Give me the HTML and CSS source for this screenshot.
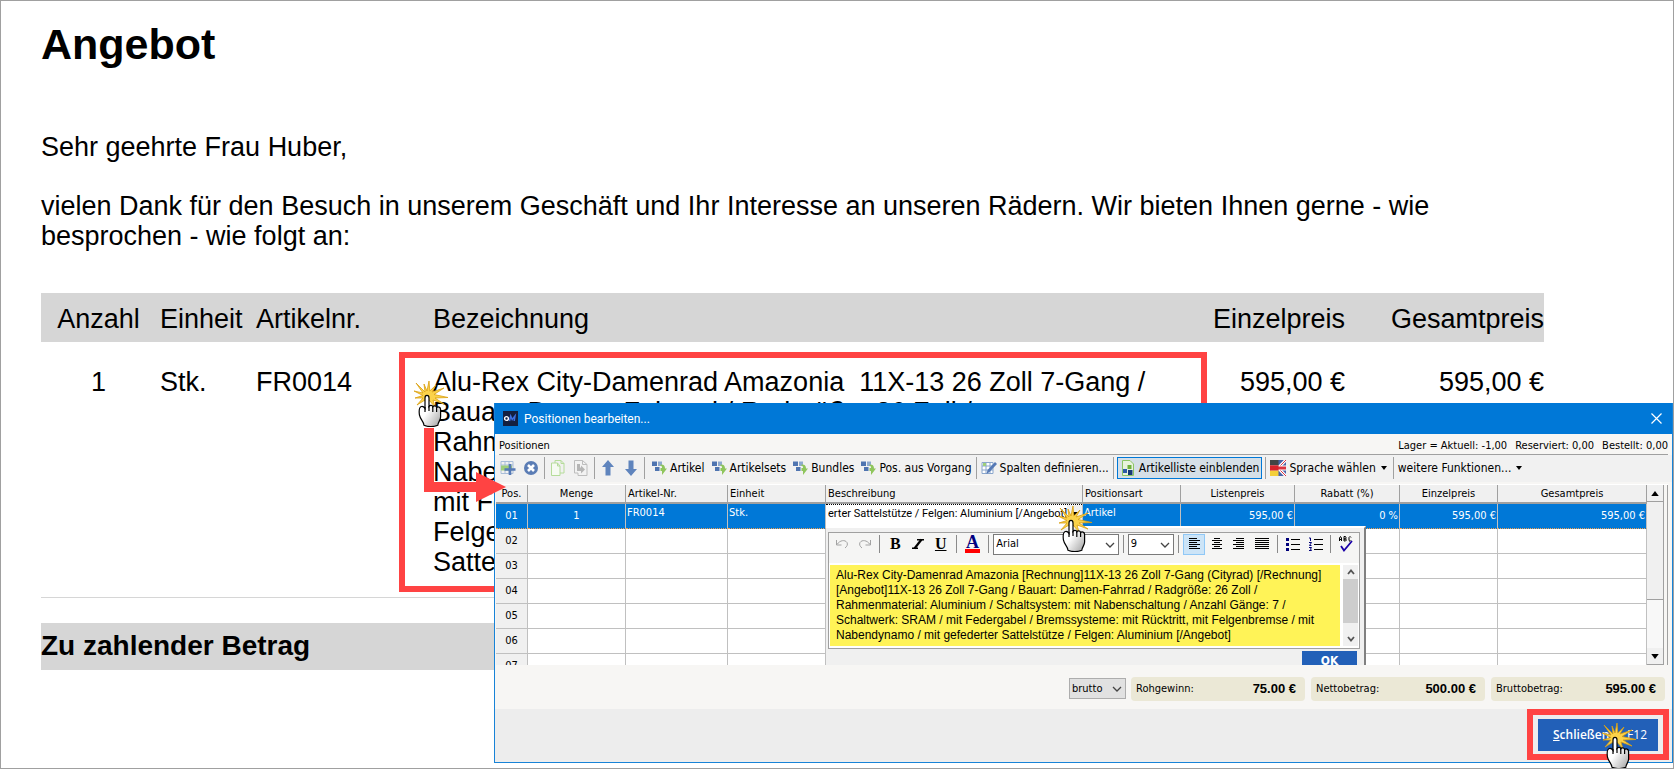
FILE: index.html
```html
<!DOCTYPE html>
<html lang="de">
<head>
<meta charset="utf-8">
<title>Angebot</title>
<link rel="stylesheet" href="styles.css">
</head>
<body>
<svg class="defs" aria-hidden="true">
  <linearGradient id="skin" x1="0" y1="0" x2="1" y2="1">
    <stop offset=".45" stop-color="#fff"/><stop offset="1" stop-color="#a0a0a0"/>
  </linearGradient>
  <symbol id="click" viewBox="0 0 36 46">
    <path d="M2 2l9 9L10 3l3 7L15 0l.8 10L22 4l-4 7 12-4-10 6.500 14 3-13 .5 9 6-11-4 2 7-6-7-2 8-2-8-8 5 6-7-8 0 8-2.500-9-4.500 9 2z" fill="#fbd24a" stroke="#d9a010" stroke-width=".8"/>
    <path d="M11 17c0-3.500 4-3.500 4 0v8.500c1-1.600 3.500-1.400 3.800.3 1-1.500 3.500-1.200 3.800.7 1.200-1.200 4-.6 4 2V36c0 3.500-2.600 5-2.800 8.300-4 1.500-10 1.500-13.800 0-.3-4-3.400-5-4.600-10.500C4.800 29 5 26 7.500 25.500c1.500-.3 2.500.5 3.500 2z" fill="url(#skin)" stroke="#000" stroke-width="1.200"/>
    <path d="M15 25v5M18.800 26v5M22.600 27v4M11 26v5" stroke="#000" stroke-width="1.200" fill="none"/>
  </symbol>
  <symbol id="insert" viewBox="0 0 16 16">
    <path d="M1 1.500h5v4.500H1z" fill="#4f74b0"/><path d="M7 1.500h4v4.500H7z" fill="#8ea9cf"/><path d="M4 7h4.500v4H4z" fill="#4f74b0"/>
    <path d="M9.500 4.500c3.500 0 4.500 1.500 4.500 4h2l-5 6.500V11H9.500V8h1.500c0-2-.5-2-1.500-2z" fill="#8fc55c"/>
  </symbol>
  <symbol id="chev" viewBox="0 0 10 6"><path d="M1 1l4 4 4-4" fill="none" stroke="#444" stroke-width="1.300"/></symbol>
  <symbol id="tri" viewBox="0 0 6 4"><path d="M0 0h6L3 4z"/></symbol>
</svg>

<main class="page">
  <h1>Angebot</h1>
  <p class="greeting">Sehr geehrte Frau Huber,</p>
  <p class="intro">vielen Dank für den Besuch in unserem Geschäft und Ihr Interesse an unseren Rädern. Wir bieten Ihnen gerne - wie besprochen - wie folgt an:</p>

  <table class="offer">
    <colgroup><col class="c-qty"><col class="c-unit"><col class="c-no"><col><col class="c-price"><col class="c-price"></colgroup>
    <thead>
      <tr><th class="mid">Anzahl</th><th>Einheit</th><th>Artikelnr.</th><th>Bezeichnung</th><th class="num">Einzelpreis</th><th class="num">Gesamtpreis</th></tr>
    </thead>
    <tbody>
      <tr>
        <td class="mid">1</td><td>Stk.</td><td>FR0014</td>
        <td class="desc">Alu-Rex City-Damenrad Amazonia&nbsp; 11X-13 26 Zoll 7-Gang /<br>Bauart: Damen-Fahrrad / Radgröße: 26 Zoll /<br>Rahmenmaterial: Aluminium / Schaltsystem: mit<br>Nabenschaltung / Anzahl Gänge: 7 / Schaltwerk: SRAM /<br>mit Federgabel / Bremssysteme: mit Rücktritt, mit<br>Felgenbremse / mit Nabendynamo / mit gefederter<br>Sattelstütze / Felgen: Aluminium<span class="frame"></span></td>
        <td class="num">595,00 €</td><td class="num">595,00 €</td>
      </tr>
    </tbody>
  </table>
  <p class="total">Zu zahlender Betrag</p>

  <section class="dialog" role="dialog" aria-labelledby="dlg-title">
    <header class="titlebar">
      <svg class="logo" viewBox="0 0 15 15"><rect width="15" height="15" fill="#14203f"/><circle cx="3.500" cy="7.500" r="1.900" fill="none" stroke="#fff" stroke-width="1.400"/><path d="M6.500 10l1.200-5 1.500 3.500L12 5l-.8 5" fill="none" stroke="#3d6fe0" stroke-width="1.500"/></svg>
      <h2 id="dlg-title">Positionen bearbeiten...</h2>
      <button class="close" aria-label="Fenster schließen"><svg viewBox="0 0 11 11"><path d="M.5.5l10 10M10.500.5l-10 10" stroke="#fff" stroke-width="1.200"/></svg></button>
    </header>
    <div class="caption">
      <span>Positionen</span>
      <span class="stock"><span>Lager = Aktuell: -1,00</span><span>Reserviert: 0,00</span><span>Bestellt: 0,00</span></span>
    </div>
    <div class="toolbar">
      <div class="tools">
        <button aria-label="Position hinzufügen"><svg class="ico" viewBox="0 0 16 16"><path d="M1 1.500h12v12H1zM1 5h12M5 1.500v12M9 1.500v12" fill="none" stroke="#a9bdd8"/><path d="M1 5.500h11v5H1z" fill="#9fcf7a"/><path d="M10 4v11M4.500 9.500h11" stroke="#5579b5" stroke-width="2.600"/></svg></button>
        <button aria-label="Position löschen"><svg class="ico" viewBox="0 0 16 16"><circle cx="8" cy="8" r="7" fill="#5b7db5"/><path d="M5 5l6 6M11 5l-6 6" stroke="#fff" stroke-width="2.600"/></svg></button>
        <i class="sep"></i>
        <button aria-label="Kopieren"><svg class="ico" viewBox="0 0 16 16"><path d="M5 3V.5h6l3 3V13h-4M11 .5v3h3" fill="none" stroke="#b5dc9a"/><path d="M1.500 3h6L10 6v9.500H1.500zM7.500 3v3H10" fill="#f6fbf2" stroke="#b5dc9a"/></svg></button>
        <button aria-label="Einfügen"><svg class="ico" viewBox="0 0 16 16"><path d="M1.500.5h8l4.500 4v11H5V13H1.500zM9.500.5v4H14" fill="#f2f2f2" stroke="#bdbdbd"/><path d="M4 4h3v3.500h1V5.500l4 4-4 4V11H4z" fill="#b5b5b5"/></svg></button>
        <i class="sep"></i>
        <button aria-label="Nach oben"><svg class="ico" viewBox="0 0 16 16"><path d="M8 0l6 7h-3.500v8.500h-5V7H2z" fill="#5f84bd"/></svg></button>
        <button aria-label="Nach unten"><svg class="ico" viewBox="0 0 16 16"><path d="M8 16l6-7h-3.500V.5h-5V9H2z" fill="#5f84bd"/></svg></button>
        <i class="sep"></i>
      </div>
      <button><svg class="ico"><use href="#insert"/></svg>Artikel</button>
      <button><svg class="ico"><use href="#insert"/></svg>Artikelsets</button>
      <button><svg class="ico"><use href="#insert"/></svg>Bundles</button>
      <button><svg class="ico"><use href="#insert"/></svg>Pos. aus Vorgang</button>
      <i class="sep"></i>
      <button><svg class="ico" viewBox="0 0 16 16"><path d="M1 2.500h11v11H1zM1 6h11M1 10h11M5 2v12M9 2v12" fill="#fff" stroke="#8aa6cc"/><path d="M2 3h3v3H2z" fill="#9fcf7a"/><path d="M5.500 14l1-4 7.500-8 2 2-7.500 8z" fill="#5579b5"/></svg>Spalten definieren...</button>
      <i class="sep"></i>
      <button class="pressed"><svg class="ico" viewBox="0 0 16 16"><path d="M2.500.5H10L13.500 4v11.500h-11z" fill="#e7f3dd" stroke="#8cc665"/><path d="M7.500 5h4v4h-4z" fill="#6fb03c"/><path d="M3 9h4v4H3z" fill="#2a5aa8"/><path d="M8 10h4.500v5H8z" fill="#173a78"/></svg>Artikelliste einblenden</button>
      <i class="sep"></i>
      <button><svg class="ico" viewBox="0 0 16 16"><path d="M8 0h8v16H8z" fill="#4a64a8"/><path d="M8 8l8-8M8 8l8 8" stroke="#fff" stroke-width="3"/><path d="M8 8l8-8M8 8l8 8" stroke="#dc3340"/><path d="M8 8h8" stroke="#fff" stroke-width="5"/><path d="M8 8h8" stroke="#dc3340" stroke-width="3"/><path d="M0 0h8.500v5.300H0z" fill="#444"/><path d="M0 5.300h8.500v5.400H0z" fill="#d9222a"/><path d="M0 10.700h8.500V16H0z" fill="#f4cf3a"/></svg>Sprache wählen<svg class="tri"><use href="#tri"/></svg></button>
      <i class="sep"></i>
      <button>weitere Funktionen...<svg class="tri"><use href="#tri"/></svg></button>
    </div>

    <div class="gridwrap">
      <table class="grid">
        <colgroup><col class="g-pos"><col class="g-98"><col class="g-102"><col class="g-98"><col class="g-desc"><col class="g-98"><col class="g-114"><col class="g-105"><col class="g-98"><col></colgroup>
        <thead><tr><th class="mid">Pos.</th><th class="mid">Menge</th><th>Artikel-Nr.</th><th>Einheit</th><th>Beschreibung</th><th>Positionsart</th><th class="mid">Listenpreis</th><th class="mid">Rabatt (%)</th><th class="mid">Einzelpreis</th><th class="mid">Gesamtpreis</th></tr></thead>
        <tbody>
          <tr class="sel"><td>01</td><td class="mid">1</td><td class="top">FR0014</td><td class="top">Stk.</td><td class="edit"><div class="editcell"><input aria-label="Beschreibung" value="erter Sattelstütze / Felgen: Aluminium [/Angebot]"><button aria-label="Editor öffnen"><svg class="tri"><use href="#tri"/></svg></button></div></td><td class="top">Artikel</td><td class="num">595,00 €</td><td class="num">0 %</td><td class="num">595,00 €</td><td class="num">595,00 €</td></tr>
          <tr><td>02</td><td></td><td></td><td></td><td></td><td></td><td></td><td></td><td></td><td></td></tr>
          <tr><td>03</td><td></td><td></td><td></td><td></td><td></td><td></td><td></td><td></td><td></td></tr>
          <tr><td>04</td><td></td><td></td><td></td><td></td><td></td><td></td><td></td><td></td><td></td></tr>
          <tr><td>05</td><td></td><td></td><td></td><td></td><td></td><td></td><td></td><td></td><td></td></tr>
          <tr><td>06</td><td></td><td></td><td></td><td></td><td></td><td></td><td></td><td></td><td></td></tr>
          <tr><td>07</td><td></td><td></td><td></td><td></td><td></td><td></td><td></td><td></td><td></td></tr>
        </tbody>
      </table>
      <div class="vscroll"><button aria-label="Hoch"><svg class="tri" viewBox="0 0 6 4"><path d="M0 4h6L3 0z"/></svg></button><div class="thumb"></div><div class="track"></div><button aria-label="Runter"><svg class="tri"><use href="#tri"/></svg></button></div>
      <div class="edge"></div>

      <div class="popup">
        <div class="editor">
          <div class="edbar">
            <button class="eb" aria-label="Rückgängig"><svg viewBox="0 0 14 12"><path d="M1.500 2v5h5M2 6.500C5 2 10 1.500 12 4.500c1 2 0 4-2 5.500" fill="none" stroke="#a3a3a3"/></svg></button>
            <button class="eb" aria-label="Wiederholen"><svg viewBox="0 0 14 12"><path d="M12.500 2v5h-5M12 6.500C9 2 4 1.500 2 4.500c-1 2 0 4 2 5.500" fill="none" stroke="#a3a3a3"/></svg></button>
            <i class="sep"></i>
            <button class="eb fmt"><b>B</b></button>
            <button class="eb" aria-label="Kursiv"><svg viewBox="0 0 14 12"><path d="M6 1.800h7M1 10.200h6" stroke="#000" stroke-width="1.500"/><path d="M10.500 1.500L3.500 10.500" stroke="#000" stroke-width="2.200"/></svg></button>
            <button class="eb fmt"><u>U</u></button>
            <i class="sep"></i>
            <button class="eb color">A</button>
            <i class="sep"></i>
            <span class="combo font"><select aria-label="Schriftart"><option>Arial</option></select><svg class="chev"><use href="#chev"/></svg></span>
            <i class="sep"></i>
            <span class="combo size"><select aria-label="Schriftgröße"><option>9</option></select><svg class="chev"><use href="#chev"/></svg></span>
            <i class="sep"></i>
            <button class="eb on" aria-label="Linksbündig"><svg viewBox="0 0 14 12"><path d="M2 .5h8M2 2.500h11M2 4.500h8M2 6.500h11M2 8.500h8M2 10.500h11" stroke="#000"/></svg></button>
            <button class="eb" aria-label="Zentriert"><svg viewBox="0 0 14 12"><path d="M4 .5h6M2 2.500h10M4 4.500h6M2 6.500h10M4 8.500h6M2 10.500h10" stroke="#000"/></svg></button>
            <button class="eb" aria-label="Rechtsbündig"><svg viewBox="0 0 14 12"><path d="M4 .5h8M1 2.500h11M4 4.500h8M1 6.500h11M4 8.500h8M1 10.500h11" stroke="#000"/></svg></button>
            <button class="eb" aria-label="Blocksatz"><svg viewBox="0 0 14 12"><path d="M0 .5h14M0 2.500h14M0 4.500h14M0 6.500h14M0 8.500h14M0 10.500h14" stroke="#000"/></svg></button>
            <i class="sep"></i>
            <button class="eb" aria-label="Aufzählung"><svg viewBox="0 0 14 14"><path d="M5 2.500h9M5 7.500h9M5 12.500h9" stroke="#000"/><path d="M0 1h3v3H0zM0 6h3v3H0zM0 11h3v3H0z" fill="#00007a"/></svg></button>
            <button class="eb" aria-label="Nummerierung"><svg viewBox="0 0 14 14"><path d="M5 2.500h9M5 7.500h9M5 12.500h9" stroke="#000"/><path d="M0 1h1.500v3M0 5.500h2.500L.5 8.500h2M0 10.500h2.500l-1 1.500 1 1.500H0" fill="none" stroke="#00007a"/></svg></button>
            <i class="sep"></i>
            <button class="eb" aria-label="Rechtschreibung"><svg class="abc" viewBox="0 0 14 16"><path d="M.5 5V2l1-1.500 1 1.500v3M.5 3.500h2M5 .5v4.500h1.500l1-1-1-1H5h1.500l.7-1-.7-1.500zM12 1.500L11 .5l-1 1v3l1 .8 1-1" fill="none" stroke="#000"/><path d="M2 10l3 4.500L13 5" fill="none" stroke="#1a00a8" stroke-width="1.800"/></svg></button>
          </div>
          <div class="edbody">
            <textarea aria-label="Beschreibungstext" rows="5" spellcheck="false" wrap="off">Alu-Rex City-Damenrad Amazonia [Rechnung]11X-13 26 Zoll 7-Gang (Cityrad) [/Rechnung]
[Angebot]11X-13 26 Zoll 7-Gang / Bauart: Damen-Fahrrad / Radgröße: 26 Zoll /
Rahmenmaterial: Aluminium / Schaltsystem: mit Nabenschaltung / Anzahl Gänge: 7 /
Schaltwerk: SRAM / mit Federgabel / Bremssysteme: mit Rücktritt, mit Felgenbremse / mit
Nabendynamo / mit gefederter Sattelstütze / Felgen: Aluminium [/Angebot]</textarea>
            <div class="edscroll"><svg viewBox="0 0 8 6"><path d="M1 5l3-3.500L7 5" fill="none" stroke="#555" stroke-width="1.800"/></svg><div class="edthumb"></div><svg viewBox="0 0 8 6"><path d="M1 1l3 3.500L7 1" fill="none" stroke="#555" stroke-width="1.800"/></svg></div>
          </div>
        </div>
        <button class="ok">OK</button>
      </div>
    </div>

    <div class="sums">
      <span class="combo tax"><select aria-label="Preisart"><option>brutto</option></select><svg class="chev"><use href="#chev"/></svg></span>
      <div class="pill"><span>Rohgewinn:</span><b>75.00 €</b></div>
      <div class="pill"><span>Nettobetrag:</span><b>500.00 €</b></div>
      <div class="pill"><span>Bruttobetrag:</span><b>595.00 €</b></div>
    </div>
    <footer class="actions">
      <div class="mark"><button class="primary"><span><u>S</u>chließen</span><small>F12</small></button><svg class="click end"><use href="#click"/></svg></div>
    </footer>
    <svg class="click cell"><use href="#click"/></svg>
  </section>

  <svg class="arrow" viewBox="0 0 82 76"><path d="M0 0h10v54h42V44l30 15-30 15V64H0z" fill="#ff4343"/></svg>
  <svg class="click start"><use href="#click"/></svg>
</main>
</body>
</html>
```
FILE: styles.css
```css
* { box-sizing: border-box; }
body { margin: 0; background: #fff; color: #000; font-family: "Liberation Sans", Arial, sans-serif; }
.defs { position: absolute; width: 0; height: 0; }
button { border: 0; padding: 0; margin: 0; background: none; font: inherit; color: inherit; }
h1, h2, p { margin: 0; }

.page { position: relative; min-height: 100vh; padding: 18px 129px 0 40px; border: 1px solid #a0a0a0; font-size: 27px; line-height: 30px; overflow: hidden; }
h1 { font-size: 43px; line-height: 50px; }
.greeting { margin-top: 63px; }
.intro { margin-top: 29px; }

.offer { width: 100%; margin-top: 42px; table-layout: fixed; border-collapse: collapse; }
.c-qty { width: 119px; }
.c-unit { width: 96px; }
.c-no { width: 177px; }
.c-price { width: 199px; }
.offer th { height: 49px; padding: 2px 0 0; background: #d6d6d6; font-weight: normal; text-align: left; white-space: nowrap; }
.offer td { padding: 25px 0 20px; vertical-align: top; white-space: nowrap; border-bottom: 1px solid #d6d6d6; }
.offer .mid { padding-right: 4px; text-align: center; }
.offer .num { text-align: right; }
.desc { position: relative; }
.frame { position: absolute; left: -34px; top: 10px; width: 808px; bottom: 5px; border: 6px solid #ff4343; }
.total { margin-top: 25px; padding: 8px 0 9px; background: #d6d6d6; font-weight: bold; font-size: 28px; }

.dialog { position: absolute; left: 493px; right: 0; top: 402px; border: 1px solid #1883d7; border-top: 0; background: #f7f6f4; font: 11px/14px "DejaVu Sans Condensed", Tahoma, sans-serif; }
.titlebar { display: flex; align-items: center; gap: 6px; height: 31px; padding: 0 10px 0 8px; background: #0078d7; color: #fff; }
.titlebar h2 { flex: 1; font-weight: normal; font-size: 12px; font-family: Roboto, "Open Sans", sans-serif; }
.logo { width: 15px; height: 15px; }
.close svg { display: block; width: 11px; height: 11px; }
.caption { display: flex; justify-content: space-between; margin: 0 4px; height: 21px; padding-top: 5px; border-bottom: 1px solid #a0a0a0; }
.stock { display: flex; gap: 8px; }

.toolbar { display: flex; align-items: center; height: 27px; padding: 0 3px 1px; gap: 2px; background: #f1f1f1; font-size: 12px; white-space: nowrap; }
.tools { display: flex; align-items: center; gap: 3px; margin-right: 2px; }
.toolbar button { display: flex; align-items: center; gap: 3px; height: 22px; padding: 0 2px; }
.toolbar .pressed { margin: 0 1px; border: 1px solid #0078d7; background: #d5dfe7; }
.ico { width: 16px; height: 16px; flex: none; }
.tri { width: 6px; height: 4px; flex: none; }
.toolbar .tri { margin: 0 2px; }
.sep { width: 1px; height: 22px; background: #a0a0a0; }

.gridwrap { position: relative; display: flex; height: 181px; margin: 2px 4px 2px 1px; border-top: 1px solid #fff; background: #fff; overflow: hidden; }
.grid { flex: 1; width: 0; height: 194px; table-layout: fixed; border-collapse: separate; border-spacing: 0; }
.g-pos { width: 32px; }
.g-98 { width: 98px; }
.g-102 { width: 102px; }
.g-105 { width: 105px; }
.g-114 { width: 114px; }
.g-desc { width: 257px; }
.grid th { height: 19px; padding: 0 2px; background: #f0f0f0; border-right: 1px solid #a0a0a0; border-bottom: 2px solid #a0a0a0; font-weight: normal; text-align: left; }
.grid td { height: 25px; padding: 0 1px; border-right: 1px solid #c0c0c0; border-bottom: 1px solid #c0c0c0; }
.grid td:first-child { background: #f0f0f0; text-align: center; }
.grid .mid { text-align: center; }
.grid .num { text-align: right; }
.grid .top { vertical-align: top; padding-top: 2px; }
.sel td, .grid .sel td:first-child { background: #0078d7; color: #fff; border-bottom: 1px dotted #f0a050; }
.grid .sel .edit { padding: 0; background: #fff; vertical-align: top; }
.editcell { display: flex; height: 18px; border-top: 1px dotted #000; }
.editcell input { flex: 1; min-width: 0; border: 0; padding: 0 0 0 2px; background: #fff; color: #000; font: 11px/16px Roboto, sans-serif; }
.editcell button { display: flex; align-items: center; justify-content: center; width: 15px; background: #f0f0f0; }

.vscroll { display: flex; flex-direction: column; width: 17px; background: #f0f0f0; border-right: 1px solid #a0a0a0; }
.vscroll button { display: flex; align-items: center; justify-content: center; height: 17px; border-bottom: 1px solid #a0a0a0; fill: #000; }
.vscroll .tri { width: 8px; height: 5px; }
.thumb { flex: 98; border-bottom: 1px solid #a0a0a0; }
.track { flex: 48; background: #f8f8f8; }
.edge { width: 4px; border-right: 1px solid #a0a0a0; background: #f7f6f4; }

.popup { position: absolute; left: 330px; top: 41px; width: 540px; height: 141px; padding: 4px 4px 0 2px; background: #f0f0f0; border-top: 2px solid #fff; border-right: 2px solid #808080; }
.editor { border: 1px solid #a0a0a0; background: #f5f5f4; }
.edbar { display: flex; align-items: center; gap: 1px; height: 30px; padding: 0 2px 8px; }
.edbar .sep { margin: 0 3px; height: 18px; background: #8a8a8a; }
.eb { display: flex; align-items: center; justify-content: center; width: 22px; height: 21px; }
.eb svg { width: 14px; height: 14px; }
.eb .abc { height: 16px; }
.fmt { font: 16px/20px "Liberation Serif", serif; }
.fmt u { font-weight: bold; }
.color { font: bold 18px/17px "Liberation Serif", serif; color: #000080; height: 18px; width: 16px; margin: 0 4px; border-bottom: 4px solid #f00; }
.on { background: #cce4f7; border: 1px solid #90c8f6; }
.combo { position: relative; display: block; }
.combo select { appearance: none; width: 100%; height: 21px; padding: 0 2px; border: 1px solid #7a7a7a; border-radius: 0; background: #fff; color: #000; font: inherit; }
.chev { position: absolute; right: 4px; top: 8px; width: 10px; height: 6px; pointer-events: none; }
.font { width: 127px; }
.size { width: 47px; }
.edbody { display: flex; background: #fff; padding: 2px 1px; }
textarea { flex: 1; height: 81px; padding: 3px 6px; border: 0; margin: 0 3px 0 0; resize: none; overflow: hidden; background: #fff357; color: #000; font: 12px/15px "Liberation Sans", Arial, sans-serif; }
.edscroll { display: flex; flex-direction: column; align-items: center; justify-content: space-between; width: 15px; padding: 4px 0; background: #f0f0f0; }
.edscroll svg { width: 8px; height: 6px; }
.edthumb { width: 15px; height: 44px; margin-bottom: 9px; background: #cdcdcd; }
.ok { display: block; width: 55px; height: 20px; margin: 2px 3px 0 auto; background: #2260b8; color: #fff; font-size: 12px; font-weight: bold; }

.sums { display: flex; justify-content: flex-end; align-items: center; gap: 6px; height: 42px; padding: 1px 7px 0 0; }
.combo.tax { width: 57px; margin-right: -1px; }
.tax select { border-color: #adadad; background: #e1e1e1; }
.pill { display: flex; justify-content: space-between; align-items: center; width: 174px; height: 24px; padding: 0 9px 0 5px; border-radius: 4px; background: #ebe8d6; }
.pill b { font: bold 13px/16px "Liberation Sans", Arial, sans-serif; }
.actions { display: flex; justify-content: flex-end; height: 53px; padding-right: 3px; background: #ededed; }
.mark { position: relative; width: 142px; height: 51px; padding: 4px 5px; border: 6px solid #ff4343; }
.primary { display: flex; align-items: center; justify-content: space-between; width: 100%; height: 32px; padding: 0 11px 0 15px; background: #2260b8; color: #fff; font: 12px/16px "Open Sans", "Noto Sans", sans-serif; }
.primary span { font-weight: 600; }
.primary small { font-size: 12px; }

.click { position: absolute; width: 36px; height: 46px; pointer-events: none; }
.start { left: 413px; top: 380px; }
.cell { left: 563px; top: 103px; }
.end { left: 69px; top: 8px; }
.arrow { position: absolute; left: 423px; top: 427px; width: 82px; height: 76px; }
```
